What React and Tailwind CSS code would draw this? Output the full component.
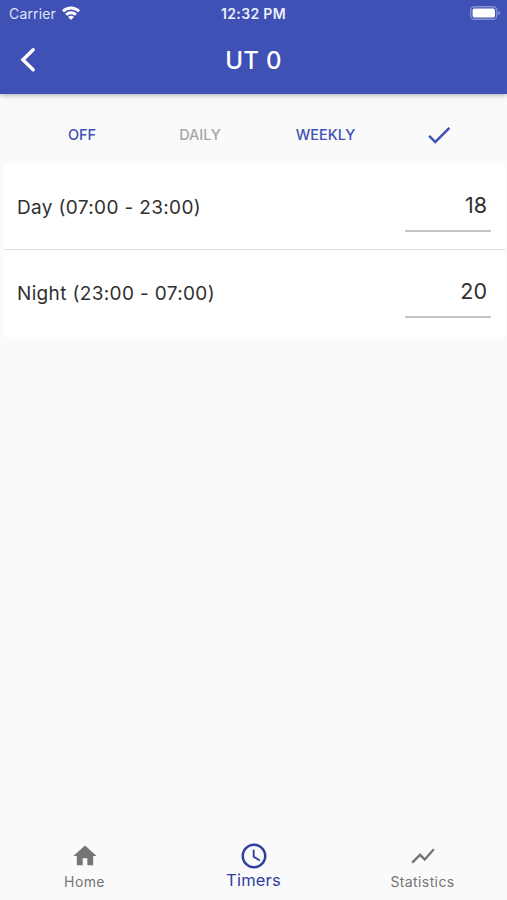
import React from "react";

function Icon({ d, className }) {
  return (
    <svg viewBox="0 0 24 24" fill="currentColor" className={className} aria-hidden="true">
      <path d={d} />
    </svg>
  );
}

const PATHS = {
  check: "M9 16.17L4.83 12l-1.42 1.41L9 19 21 7l-1.41-1.41z",
  home: "M10 20v-6h4v6h5v-8h3L12 3 2 12h3v8z",
  clock:
    "M11.99 2C6.47 2 2 6.48 2 12s4.47 10 9.99 10C17.52 22 22 17.52 22 12S17.52 2 11.99 2zM12 20c-4.42 0-8-3.58-8-8s3.58-8 8-8 8 3.58 8 8-3.58 8-8 8zM12.5 7H11v6l5.25 3.15.75-1.23-4.5-2.67z",
  chart: "M3.5 18.49l6-6.01 4 4L22 6.92l-1.41-1.41-7.09 7.97-4-4L2 16.99z",
};

function StatusBar() {
  return (
    <div className="grid h-7 grid-cols-3 items-center text-[14px] leading-7">
      <div className="flex items-center pl-[9px] text-[#dfe3f8]">
        <span className="w-[53px] text-[14px] tracking-[0.15px]">Carrier</span>
        <svg viewBox="0 0 18 14" className="-mt-0.5 h-[14px] w-[18px]" fill="none" stroke="white" strokeWidth="2.8">
          <path d="M1 5.2a11.6 11.6 0 0 1 16 0" />
          <path d="M4.1 8.7a7.1 7.1 0 0 1 9.8 0" />
          <path d="M9 13.9 6.1 11a4 4 0 0 1 5.8 0z" fill="white" stroke="none" />
        </svg>
      </div>
      <div className="text-center text-[14px] font-semibold tracking-[0.35px] text-[#eceffc]">12:32 PM</div>
      <div className="flex justify-end pr-[6px]">
        <svg viewBox="0 0 31 14" className="-mt-0.5 h-[14px] w-[31px]">
          <rect x="0.75" y="0.75" width="26" height="12.5" rx="3.5" fill="none" stroke="#8793d3" strokeWidth="1.3" />
          <rect x="2.6" y="2.4" width="22.4" height="9.2" rx="1.8" fill="white" />
          <path d="M28.2 4.8c2.6.8 2.6 3.6 0 4.4z" fill="#8793d3" />
        </svg>
      </div>
    </div>
  );
}

function Row({ label, value, divider }) {
  return (
    <div
      className={
        divider
          ? "flex h-[86px] items-start justify-between border-b border-[#dfdfdf] pl-[13px] pr-[14px]"
          : "flex h-[87px] items-start justify-between pl-[13px] pr-[14px]"
      }
    >
      <span className="pt-[30px] text-[19px] leading-[28px] tracking-[0.35px]">{label}</span>
      <div className="mt-[23px] h-[45px] w-[86px] border-b-2 border-[#c3c3c3] pr-[4px] text-right text-[21.5px] leading-[36px]">
        {value}
      </div>
    </div>
  );
}

function NavItem({ icon, label, active }) {
  return (
    <div
      className={
        active
          ? "flex flex-col items-center pt-[11px] text-[#303f9f]"
          : "flex flex-col items-center pt-[12px] text-[#757575]"
      }
    >
      <Icon d={icon} className={active ? "h-[30px] w-[30px]" : "h-[28px] w-[28px]"} />
      <span
        className={
          active
            ? "-mt-0.5 text-[16.5px] leading-[22px] tracking-[0.2px]"
            : "text-[14px] leading-[24px] tracking-[0.4px]"
        }
      >
        {label}
      </span>
    </div>
  );
}

export default function App() {
  return (
    <div className="flex h-[900px] w-[507px] flex-col overflow-hidden bg-[#fafafa] font-['Inter',sans-serif] text-[#303030]">
      <header className="z-10 h-[93.5px] shrink-0 bg-[#3f51b5] text-white shadow-[0_1px_5px_rgba(0,0,0,0.35)]">
        <StatusBar />
        <div className="grid h-[64px] grid-cols-3 items-center">
          <svg
            viewBox="0 0 16 26"
            className="ml-5 h-[26px] w-4"
            fill="none"
            stroke="currentColor"
            strokeWidth="3.4"
            strokeLinecap="round"
            aria-label="Back"
          >
            <path d="M13.2 2.7 2.9 12.7l10.3 10" />
          </svg>
          <h1 className="pt-px text-center text-[24px] font-medium leading-[32px] tracking-[0.3px]">UT 0</h1>
        </div>
      </header>
      <main className="flex-1 px-1">
        <div className="flex h-[70px] items-center pt-[13px] text-[14.5px] font-medium text-[#3f51b5]">
          <span className="w-[156px] text-center">OFF</span>
          <span className="w-[80px] text-center text-[#a6a6a6]">DAILY</span>
          <span className="w-[171px] text-center">WEEKLY</span>
          <Icon d={PATHS.check} className="ml-[13px] h-[30px] w-[30px]" />
        </div>
        <section className="w-[501px] bg-white">
          <Row label="Day (07:00 - 23:00)" value="18" divider />
          <Row label="Night (23:00 - 07:00)" value="20" />
        </section>
      </main>
      <nav className="grid h-[71px] shrink-0 grid-cols-3 border-t border-[#f6f6f6]">
        <NavItem icon={PATHS.home} label="Home" />
        <NavItem icon={PATHS.clock} label="Timers" active />
        <NavItem icon={PATHS.chart} label="Statistics" />
      </nav>
    </div>
  );
}
